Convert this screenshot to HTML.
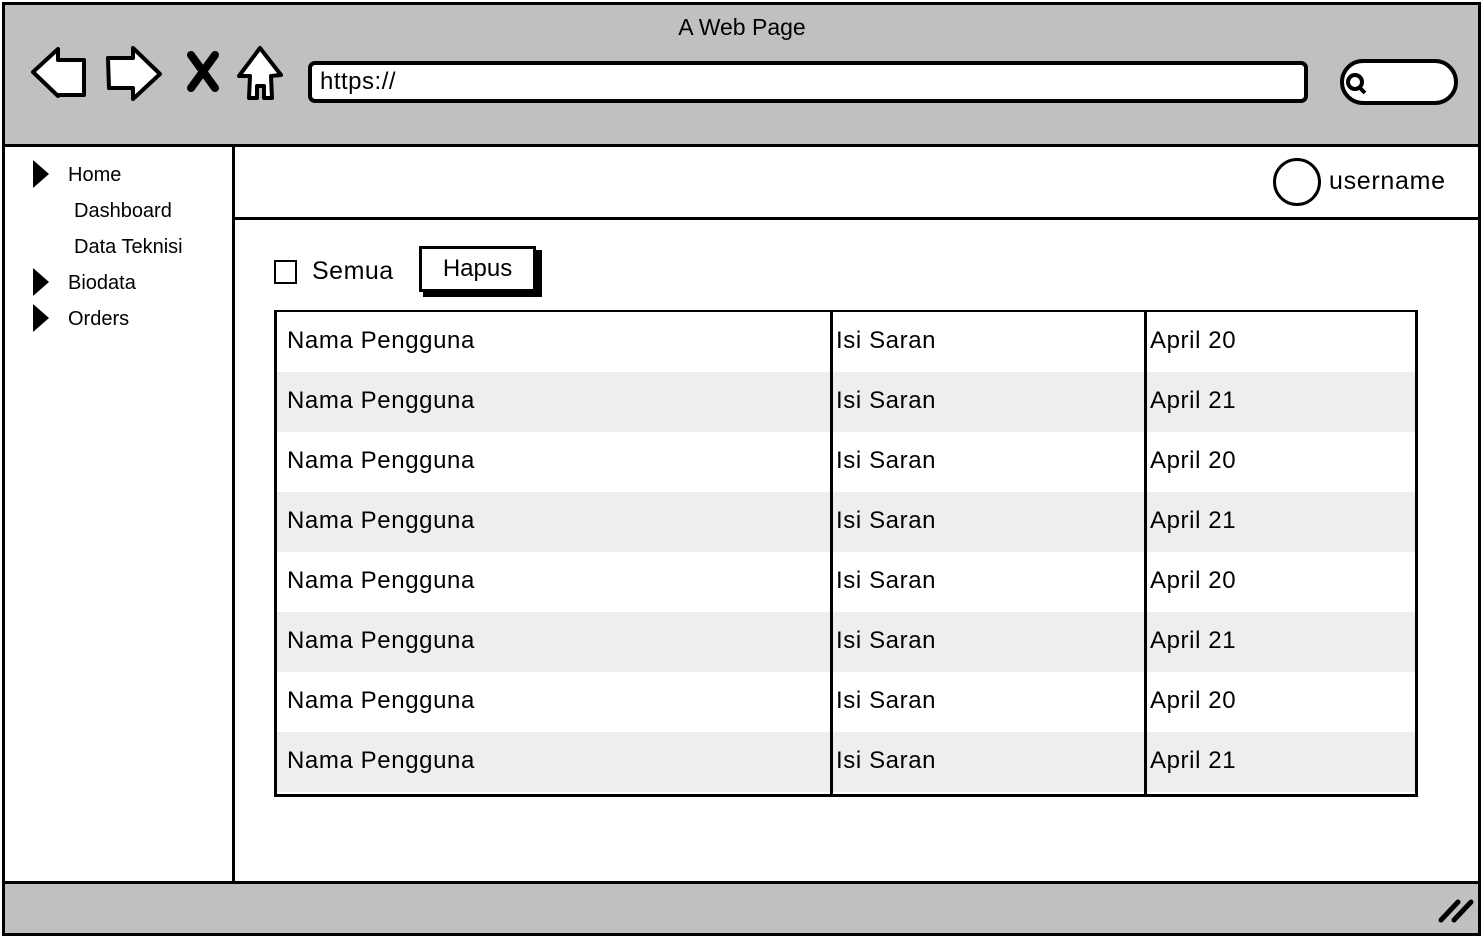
<!DOCTYPE html>
<html><head><style>
*{margin:0;padding:0;box-sizing:border-box}
body{width:1484px;height:938px;background:#fff;position:relative;overflow:hidden;font-family:"Liberation Sans",sans-serif;color:#000}
.a{position:absolute}
.row{position:absolute;left:277px;width:1138px;height:60px;font-size:24px;line-height:58px;letter-spacing:0.6px}
.row span{position:absolute}
</style></head><body>
<div class="a" style="left:2px;top:2px;width:1479px;height:934px;border:3px solid #000;background:#c0c0c0"></div>
<div class="a" style="left:0;top:12px;width:1484px;text-align:center;font-size:23px;line-height:30px">A Web Page</div>
<svg class="a" style="left:0;top:0" width="1484" height="140">
<path d="M33 72 L58 49 L58 60 L84 60 L84 95 L58 95 L58 96 Z" fill="#fff" stroke="#000" stroke-width="4" stroke-linejoin="round"/>
<path d="M108 58 L133 58 L133 48 L160 74 L133 99 L133 88 L109 88 Z" fill="#fff" stroke="#000" stroke-width="4" stroke-linejoin="round"/>
<path d="M191 55 L215 88 M215 55 L191 88" stroke="#000" stroke-width="8" stroke-linecap="round"/>
<path d="M260 48 L281 75 L271 76 L272 98 L264 98 L264 86 L257 86 L257 98 L249 98 L250 76 L239 76 Z" fill="#fff" stroke="#000" stroke-width="4" stroke-linejoin="round"/>
<rect x="310" y="63" width="996" height="38" rx="5" fill="#fff" stroke="#000" stroke-width="4"/>
<rect x="1342" y="61" width="114" height="42" rx="21" fill="#fff" stroke="#000" stroke-width="4"/>
<circle cx="1355" cy="82" r="7" fill="none" stroke="#000" stroke-width="4"/>
<path d="M1359 87 L1365 93" stroke="#000" stroke-width="4"/>
</svg>
<div class="a" style="left:320px;top:66px;font-size:24px;line-height:32px;letter-spacing:0.5px">https://</div>
<div class="a" style="left:2px;top:144px;width:1479px;height:740px;border:3px solid #000;background:#fff"></div>
<div class="a" style="left:2px;top:144px;width:233px;height:740px;border:3px solid #000;background:#fff"></div>
<div class="a" style="left:232px;top:144px;width:1249px;height:76px;border:3px solid #000;background:#fff"></div>
<svg class="a" style="left:0;top:150px" width="60" height="190">
<path d="M33 10 L49 24 L33 38 Z M33 118 L49 132 L33 146 Z M33 154 L49 168 L33 182 Z" fill="#000"/>
</svg>
<div class="a" style="left:68px;top:162px;font-size:20px;line-height:26px">Home</div>
<div class="a" style="left:74px;top:198px;font-size:20px;line-height:26px">Dashboard</div>
<div class="a" style="left:74px;top:234px;font-size:20px;line-height:26px">Data Teknisi</div>
<div class="a" style="left:68px;top:270px;font-size:20px;line-height:26px">Biodata</div>
<div class="a" style="left:68px;top:306px;font-size:20px;line-height:26px">Orders</div>
<div class="a" style="left:1273px;top:158px;width:48px;height:48px;border:3px solid #000;border-radius:50%"></div>
<div class="a" style="left:1329px;top:166px;font-size:25px;line-height:30px;letter-spacing:0.7px">username</div>
<div class="a" style="left:274px;top:260px;width:23px;height:24px;border:2px solid #000"></div>
<div class="a" style="left:312px;top:256px;font-size:25px;line-height:30px;letter-spacing:0.5px">Semua</div>
<div class="a" style="left:423px;top:250px;width:119px;height:47px;background:#000"></div>
<div class="a" style="left:419px;top:246px;width:117px;height:46px;border:3px solid #000;background:#fff;font-size:24px;line-height:40px;text-align:center">Hapus</div>
<div class="a" style="left:274px;top:310px;width:1144px;height:487px;border:3px solid #000;background:#fff"></div>
<div class="row" style="top:312px;background:#fff"><span style="left:10px">Nama Pengguna</span><span style="left:559px">Isi Saran</span><span style="left:873px">April 20</span></div>
<div class="row" style="top:372px;background:#eee"><span style="left:10px">Nama Pengguna</span><span style="left:559px">Isi Saran</span><span style="left:873px">April 21</span></div>
<div class="row" style="top:432px;background:#fff"><span style="left:10px">Nama Pengguna</span><span style="left:559px">Isi Saran</span><span style="left:873px">April 20</span></div>
<div class="row" style="top:492px;background:#eee"><span style="left:10px">Nama Pengguna</span><span style="left:559px">Isi Saran</span><span style="left:873px">April 21</span></div>
<div class="row" style="top:552px;background:#fff"><span style="left:10px">Nama Pengguna</span><span style="left:559px">Isi Saran</span><span style="left:873px">April 20</span></div>
<div class="row" style="top:612px;background:#eee"><span style="left:10px">Nama Pengguna</span><span style="left:559px">Isi Saran</span><span style="left:873px">April 21</span></div>
<div class="row" style="top:672px;background:#fff"><span style="left:10px">Nama Pengguna</span><span style="left:559px">Isi Saran</span><span style="left:873px">April 20</span></div>
<div class="row" style="top:732px;background:#eee"><span style="left:10px">Nama Pengguna</span><span style="left:559px">Isi Saran</span><span style="left:873px">April 21</span></div>
<div class="a" style="left:830px;top:310px;width:3px;height:487px;background:#000"></div>
<div class="a" style="left:1144px;top:310px;width:3px;height:487px;background:#000"></div>
<svg class="a" style="left:1436px;top:896px" width="40" height="30">
<path d="M5 24 L22 6 M18 24 L35 6" stroke="#000" stroke-width="5" stroke-linecap="round"/>
</svg>
</body></html>
